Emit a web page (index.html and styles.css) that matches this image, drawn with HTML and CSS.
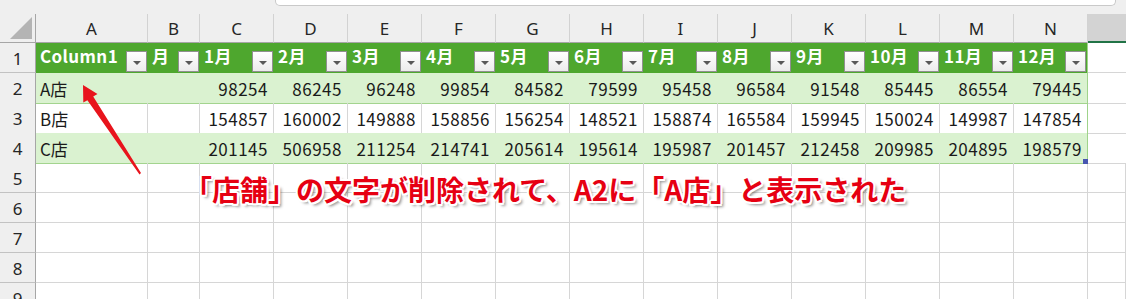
FILE: index.html
```html
<!DOCTYPE html>
<html lang="ja">
<head>
<meta charset="utf-8">
<link rel="stylesheet" href="styles.css">
</head>
<body>
<div class="sheet">
  <div class="topstrip"><div class="fbar"></div></div>
  <div class="row colhead">
    <div class="corner"><span class="tri"></span></div>
    <div class="ch">A</div><div class="ch">B</div><div class="ch">C</div><div class="ch">D</div>
    <div class="ch">E</div><div class="ch">F</div><div class="ch">G</div><div class="ch">H</div>
    <div class="ch">I</div><div class="ch">J</div><div class="ch">K</div><div class="ch">L</div>
    <div class="ch">M</div><div class="ch">N</div><div class="ch sel"></div>
  </div>
  <div class="row">
    <div class="rh">1</div>
    <div class="th"><span>Column1</span><i class="fb"></i></div>
    <div class="th"><span>月</span><i class="fb"></i></div>
    <div class="th"><span>1月</span><i class="fb"></i></div>
    <div class="th"><span>2月</span><i class="fb"></i></div>
    <div class="th"><span>3月</span><i class="fb"></i></div>
    <div class="th"><span>4月</span><i class="fb"></i></div>
    <div class="th"><span>5月</span><i class="fb"></i></div>
    <div class="th"><span>6月</span><i class="fb"></i></div>
    <div class="th"><span>7月</span><i class="fb"></i></div>
    <div class="th"><span>8月</span><i class="fb"></i></div>
    <div class="th"><span>9月</span><i class="fb"></i></div>
    <div class="th"><span>10月</span><i class="fb"></i></div>
    <div class="th"><span>11月</span><i class="fb"></i></div>
    <div class="th last"><span>12月</span><i class="fb"></i></div>
    <div class="c out"></div>
  </div>
  <div class="row band">
    <div class="rh">2</div>
    <div class="c t txt">A店</div><div class="c t"></div>
    <div class="c t n">98254</div><div class="c t n">86245</div><div class="c t n">96248</div><div class="c t n">99854</div>
    <div class="c t n">84582</div><div class="c t n">79599</div><div class="c t n">95458</div><div class="c t n">96584</div>
    <div class="c t n">91548</div><div class="c t n">85445</div><div class="c t n">86554</div><div class="c t n last">79445</div>
    <div class="c out"></div>
  </div>
  <div class="row plain">
    <div class="rh">3</div>
    <div class="c t txt">B店</div><div class="c t"></div>
    <div class="c t n">154857</div><div class="c t n">160002</div><div class="c t n">149888</div><div class="c t n">158856</div>
    <div class="c t n">156254</div><div class="c t n">148521</div><div class="c t n">158874</div><div class="c t n">165584</div>
    <div class="c t n">159945</div><div class="c t n">150024</div><div class="c t n">149987</div><div class="c t n last">147854</div>
    <div class="c out"></div>
  </div>
  <div class="row band">
    <div class="rh">4</div>
    <div class="c t txt">C店</div><div class="c t"></div>
    <div class="c t n">201145</div><div class="c t n">506958</div><div class="c t n">211254</div><div class="c t n">214741</div>
    <div class="c t n">205614</div><div class="c t n">195614</div><div class="c t n">195987</div><div class="c t n">201457</div>
    <div class="c t n">212458</div><div class="c t n">209985</div><div class="c t n">204895</div><div class="c t n last handle-cell">198579<i class="handle"></i></div>
    <div class="c out"></div>
  </div>
  <div class="row"><div class="rh">5</div><div class="c"></div><div class="c"></div><div class="c"></div><div class="c"></div><div class="c"></div><div class="c"></div><div class="c"></div><div class="c"></div><div class="c"></div><div class="c"></div><div class="c"></div><div class="c"></div><div class="c"></div><div class="c"></div><div class="c"></div></div>
  <div class="row"><div class="rh">6</div><div class="c"></div><div class="c"></div><div class="c"></div><div class="c"></div><div class="c"></div><div class="c"></div><div class="c"></div><div class="c"></div><div class="c"></div><div class="c"></div><div class="c"></div><div class="c"></div><div class="c"></div><div class="c"></div><div class="c"></div></div>
  <div class="row"><div class="rh">7</div><div class="c"></div><div class="c"></div><div class="c"></div><div class="c"></div><div class="c"></div><div class="c"></div><div class="c"></div><div class="c"></div><div class="c"></div><div class="c"></div><div class="c"></div><div class="c"></div><div class="c"></div><div class="c"></div><div class="c"></div></div>
  <div class="row"><div class="rh">8</div><div class="c"></div><div class="c"></div><div class="c"></div><div class="c"></div><div class="c"></div><div class="c"></div><div class="c"></div><div class="c"></div><div class="c"></div><div class="c"></div><div class="c"></div><div class="c"></div><div class="c"></div><div class="c"></div><div class="c"></div></div>
  <div class="row"><div class="rh">9</div><div class="c"></div><div class="c"></div><div class="c"></div><div class="c"></div><div class="c"></div><div class="c"></div><div class="c"></div><div class="c"></div><div class="c"></div><div class="c"></div><div class="c"></div><div class="c"></div><div class="c"></div><div class="c"></div><div class="c"></div></div>

  <svg class="arrow" width="200" height="200" viewBox="0 0 200 200">
    <polygon points="83,85 97.5,94 93.2,96.5 141,173 139.5,174.5 87.4,100.3 83.3,102.5" fill="#e8141c"/>
  </svg>
  <div class="note">「店舗」の文字が削除されて、A2に「A店」と表示された</div>
</div>
</body>
</html>
```
FILE: styles.css
```css
html, body {
  margin: 0;
  padding: 0;
  background: #ffffff;
  overflow: hidden;
}
.sheet {
  position: relative;
  width: 1126px;
  height: 299px;
  overflow: hidden;
  font-family: "Noto Sans CJK JP", sans-serif;
}
.topstrip {
  height: 14px;
  background: #efefef;
}
.fbar {
  margin-left: 275px;
  margin-right: 10px;
  height: 5px;
  background: #ffffff;
  border: 1px solid #c9c9c9;
  border-top: none;
  border-radius: 0 0 5px 5px;
}
.row {
  display: grid;
  grid-template-columns: 36px 112px 52px repeat(12, 74px) 1fr;
  height: 30px;
}
.row > div {
  box-sizing: border-box;
  min-width: 0;
}
.colhead {
  height: 29px;
  background: #efefef;
}
.corner {
  position: relative;
  border-right: 1px solid #a6a6a6;
  border-bottom: 1px solid #a6a6a6;
}
.tri {
  position: absolute;
  right: 3px;
  bottom: 3px;
  width: 0;
  height: 0;
  border-left: 22px solid transparent;
  border-bottom: 22px solid #b4b4b4;
}
.ch {
  border-right: 1px solid #d2d2d2;
  border-bottom: 1px solid #a6a6a6;
  font-family: "Noto Sans", sans-serif;
  font-size: 17px;
  color: #262626;
  display: flex;
  align-items: center;
  justify-content: center;
  padding-top: 1px;
}
.ch.sel {
  background: #d3d3d3;
  border-right: none;
  border-bottom: 2px solid #217346;
}
.rh {
  background: #efefef;
  border-right: 1px solid #a6a6a6;
  border-bottom: 1px solid #c2c2c2;
  font-family: "Noto Sans", sans-serif;
  font-size: 17px;
  color: #262626;
  display: flex;
  align-items: center;
  justify-content: center;
  padding-top: 1px;
}
.th {
  background: #4ea72e;
  color: #ffffff;
  font-weight: 700;
  font-size: 17px;
  display: flex;
  justify-content: space-between;
  align-items: center;
  padding-left: 4px;
  padding-right: 1px;
  padding-bottom: 1px;
  white-space: nowrap;
}
.th span {
  letter-spacing: 0.4px;
  margin-top: -4px;
}
.th.last {
  border-right: 1px solid #9fd38a;
}
.fb {
  position: relative;
  align-self: flex-end;
  flex: none;
  width: 21px;
  height: 21px;
  box-sizing: border-box;
  border: 1px solid #909090;
  background: linear-gradient(#ffffff, #ececec);
}
.fb::after {
  content: "";
  position: absolute;
  left: 6px;
  top: 9px;
  border-left: 4px solid transparent;
  border-right: 4px solid transparent;
  border-top: 4px solid #595959;
}
.c {
  border-right: 1px solid #d6d6d6;
  border-bottom: 1px solid #d6d6d6;
  font-size: 17px;
  color: #1a1a1a;
  white-space: nowrap;
  line-height: 29px;
  padding-top: 1px;
}
.c.out {
  border-right: none;
}
.band .t {
  background: #daf2d0;
  border-right-color: #daf2d0;
  border-bottom-color: #a3d48e;
}
.plain .t {
  border-bottom-color: #a3d48e;
}
.t.last {
  border-right-color: #9fd38a;
}
.txt {
  padding-left: 4px;
}
.n {
  text-align: right;
  padding-right: 5px;
  letter-spacing: 0.5px;
}
.handle-cell {
  position: relative;
}
.handle {
  position: absolute;
  right: -1px;
  bottom: -1px;
  width: 5px;
  height: 5px;
  background: #4856b0;
}
.arrow {
  position: absolute;
  left: 0;
  top: 0;
}
.note {
  position: absolute;
  left: 184px;
  top: 174px;
  font-family: "Noto Sans CJK JP", sans-serif;
  font-weight: 700;
  font-size: 28px;
  line-height: 30px;
  color: #e60012;
  white-space: nowrap;
  text-shadow:
    2px 0 0 #fff, -2px 0 0 #fff, 0 2px 0 #fff, 0 -2px 0 #fff,
    1.5px 1.5px 0 #fff, -1.5px 1.5px 0 #fff, 1.5px -1.5px 0 #fff, -1.5px -1.5px 0 #fff,
    3px 3px 3px rgba(0, 0, 0, 0.45);
}
```
